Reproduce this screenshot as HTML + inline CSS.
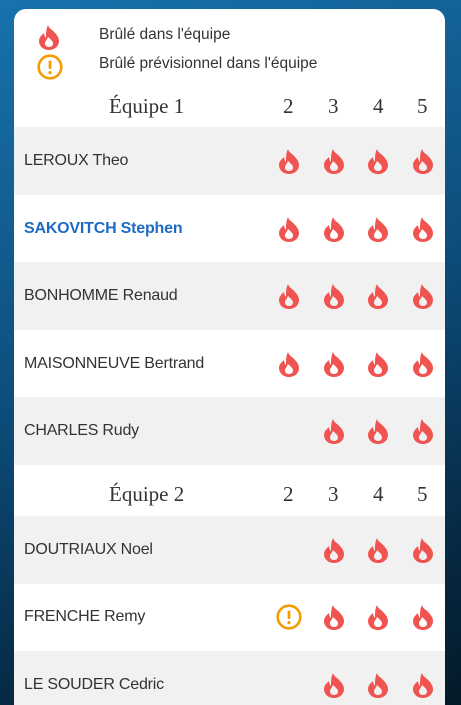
<!DOCTYPE html>
<html style="width:461px;height:705px;overflow:hidden"><head><meta charset="utf-8"><style>
*{margin:0;padding:0;box-sizing:border-box}
body{width:461px;height:705px;overflow:hidden;background:linear-gradient(160deg,#1872ad 0%,#0d4f7e 45%,#062a45 80%,#041a28 100%);font-family:"Liberation Sans",sans-serif;position:relative}
.card{position:absolute;left:14px;top:9px;width:431px;height:696px;background:#fff;border-radius:12px 12px 0 0;overflow:hidden}
.leg{position:absolute;left:85px;font-size:15.5px;color:#333}
.li{position:absolute;left:24px}
.row{position:absolute;left:0;width:431px;height:68px}
.row.g{background:#f1f1f1}
.name{position:absolute;left:10px;top:0;line-height:68px;font-size:16px;color:#333;letter-spacing:-0.2px}
.name.b{color:#1e6bc4;font-weight:bold}
.ic{position:absolute;top:21px;width:22px;height:26px}
.hd{position:absolute;left:0;width:431px;font-family:"Liberation Serif",serif;font-size:21px;color:#333}
.hd span{position:absolute}
</style></head><body>
<svg width="0" height="0" style="position:absolute"><defs>
<symbol id="f" viewBox="0 0 22 26"><path d="M10 1C11 5 15 6 17 9C19 11 21 14 21 17C21 22 17 26 11 26C5 26 1 22 1 17C1 13 4 11 6 9C6 11 7 13 8 14C8 9 8 5 10 1ZM11 23C8.5 23 7 21.5 7 19.5C7 17 9 16 10 13C12 15 15 17 15 19.5C15 21.5 13.5 23 11 23Z" fill="#f05451" fill-rule="evenodd"/></symbol>
<symbol id="w" viewBox="0 0 26 26"><circle cx="13" cy="13" r="11.3" fill="none" stroke="#f59c00" stroke-width="2.6"/><rect x="11.6" y="6.5" width="2.8" height="8.5" rx="1.2" fill="#f59c00"/><circle cx="13" cy="18.6" r="1.6" fill="#f59c00"/></symbol>
</defs></svg>
<div class="card">
<svg class="li" style="top:15px" width="22" height="26"><use href="#f"/></svg>
<svg class="li" style="top:45px;left:23px" width="26" height="26"><use href="#w"/></svg>
<div class="leg" style="top:17px">Brûlé dans l'équipe</div>
<div class="leg" style="top:46px">Brûlé prévisionnel dans l'équipe</div>

<div class="hd" style="top:85px"><span style="left:95px">Équipe 1</span><span style="left:269px">2</span><span style="left:314px">3</span><span style="left:359px">4</span><span style="left:403px">5</span></div>

<div class="row g" style="top:118px"><div class="name">LEROUX Theo</div>
<svg class="ic" style="left:264px"><use href="#f"/></svg><svg class="ic" style="left:309px"><use href="#f"/></svg><svg class="ic" style="left:353px"><use href="#f"/></svg><svg class="ic" style="left:398px"><use href="#f"/></svg></div>
<div class="row" style="top:186px"><div class="name b">SAKOVITCH Stephen</div>
<svg class="ic" style="left:264px"><use href="#f"/></svg><svg class="ic" style="left:309px"><use href="#f"/></svg><svg class="ic" style="left:353px"><use href="#f"/></svg><svg class="ic" style="left:398px"><use href="#f"/></svg></div>
<div class="row g" style="top:253px"><div class="name">BONHOMME Renaud</div>
<svg class="ic" style="left:264px"><use href="#f"/></svg><svg class="ic" style="left:309px"><use href="#f"/></svg><svg class="ic" style="left:353px"><use href="#f"/></svg><svg class="ic" style="left:398px"><use href="#f"/></svg></div>
<div class="row" style="top:321px"><div class="name">MAISONNEUVE Bertrand</div>
<svg class="ic" style="left:264px"><use href="#f"/></svg><svg class="ic" style="left:309px"><use href="#f"/></svg><svg class="ic" style="left:353px"><use href="#f"/></svg><svg class="ic" style="left:398px"><use href="#f"/></svg></div>
<div class="row g" style="top:388px"><div class="name">CHARLES Rudy</div>
<svg class="ic" style="left:309px"><use href="#f"/></svg><svg class="ic" style="left:353px"><use href="#f"/></svg><svg class="ic" style="left:398px"><use href="#f"/></svg></div>

<div class="hd" style="top:473px"><span style="left:95px">Équipe 2</span><span style="left:269px">2</span><span style="left:314px">3</span><span style="left:359px">4</span><span style="left:403px">5</span></div>

<div class="row g" style="top:507px"><div class="name">DOUTRIAUX Noel</div>
<svg class="ic" style="left:309px"><use href="#f"/></svg><svg class="ic" style="left:353px"><use href="#f"/></svg><svg class="ic" style="left:398px"><use href="#f"/></svg></div>
<div class="row" style="top:574px"><div class="name">FRENCHE Remy</div>
<svg class="ic" style="left:262px;width:26px;top:21px"><use href="#w"/></svg><svg class="ic" style="left:309px"><use href="#f"/></svg><svg class="ic" style="left:353px"><use href="#f"/></svg><svg class="ic" style="left:398px"><use href="#f"/></svg></div>
<div class="row g" style="top:642px"><div class="name">LE SOUDER Cedric</div>
<svg class="ic" style="left:309px"><use href="#f"/></svg><svg class="ic" style="left:353px"><use href="#f"/></svg><svg class="ic" style="left:398px"><use href="#f"/></svg></div>
</div>
</body></html>
